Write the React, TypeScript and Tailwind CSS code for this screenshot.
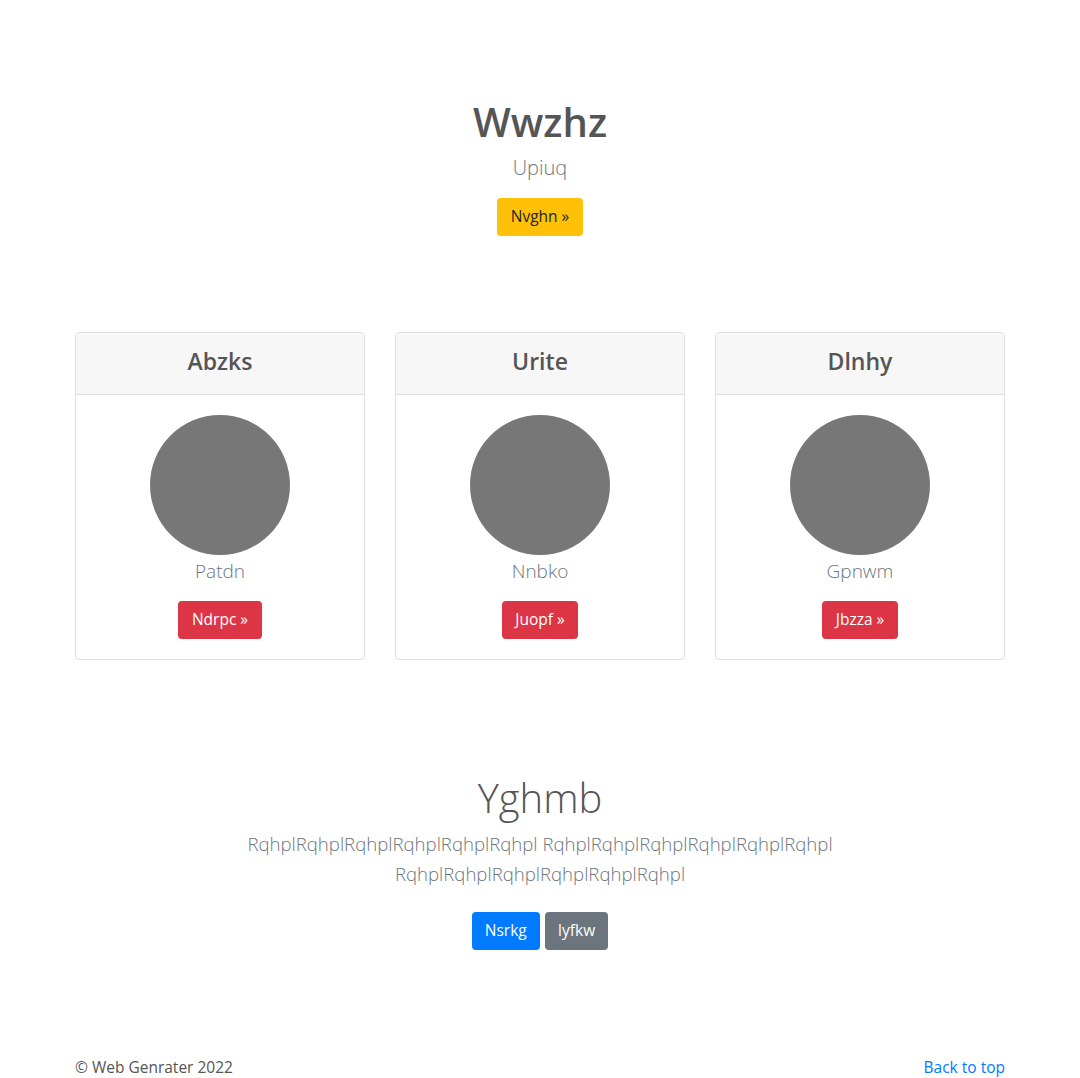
import React from "react";

const cards = [
  { title: "Abzks", name: "Patdn", btn: "Ndrpc" },
  { title: "Urite", name: "Nnbko", btn: "Juopf" },
  { title: "Dlnhy", name: "Gpnwm", btn: "Jbzza" },
];

export default function App() {
  const r = "Rqhpl".repeat(6);
  return (
    <div className="bg-white min-h-[1078px] text-[#555]" style={{ fontFamily: '"Open Sans", "Noto Sans", sans-serif' }}>
      <div className="w-[930px] mx-auto">
        <section className="pt-[98px] flex flex-col items-center">
          <h1 className="text-[40px] leading-[48px] font-semibold text-[#555]">Wwzhz</h1>
          <p className="mt-[7px] text-[20px] leading-[30px] font-light text-[#6c757d]">Upiuq</p>
          <a className="mt-[15px] h-[38px] px-[14px] flex items-center rounded bg-[#ffc107] text-[#212529] text-[15.5px]">Nvghn »</a>
        </section>

        <section className="mt-[96px] grid grid-cols-3 gap-[30px]">
          {cards.map((c) => (
            <div key={c.title} className="border border-[#dfdfdf] rounded flex flex-col">
              <div className="bg-[#f7f7f7] border-b border-[#dfdfdf] h-[62px] flex items-center justify-center rounded-t pb-[6px]">
                <h2 className="text-[23px] leading-[28px] font-semibold text-[#555]">{c.title}</h2>
              </div>
              <div className="pt-[20px] pb-[20px] flex flex-col items-center">
                <div className="w-[140px] h-[140px] rounded-full bg-[#777]" />
                <p className="mt-[1px] text-[19px] leading-[30px] font-light text-[#6c757d]">{c.name}</p>
                <a className="mt-[15px] h-[38px] px-[13.5px] flex items-center rounded bg-[#dc3545] text-white text-[15.5px]">{c.btn} »</a>
              </div>
            </div>
          ))}
        </section>

        <section className="mt-[114px] flex flex-col items-center text-center">
          <h2 className="text-[40px] leading-[48px] font-light text-[#555]">Yghmb</h2>
          <p className="mt-[7px] w-[640px] text-[18.6px] leading-[30px] font-light text-[#6c757d] break-normal">
            {r} {r} {r}
          </p>
          <div className="mt-[23px] flex gap-[5px]">
            <a className="h-[38px] px-[13px] flex items-center rounded bg-[#007bff] text-white text-[15.5px]">Nsrkg</a>
            <a className="h-[38px] px-[13px] flex items-center rounded bg-[#6c757d] text-white text-[15.5px]">Iyfkw</a>
          </div>
        </section>

        <footer className="mt-[105px] flex justify-between text-[15.5px] leading-[24px]">
          <span className="text-[#555]">© Web Genrater 2022</span>
          <a className="text-[#007bff]">Back to top</a>
        </footer>
      </div>
    </div>
  );
}
